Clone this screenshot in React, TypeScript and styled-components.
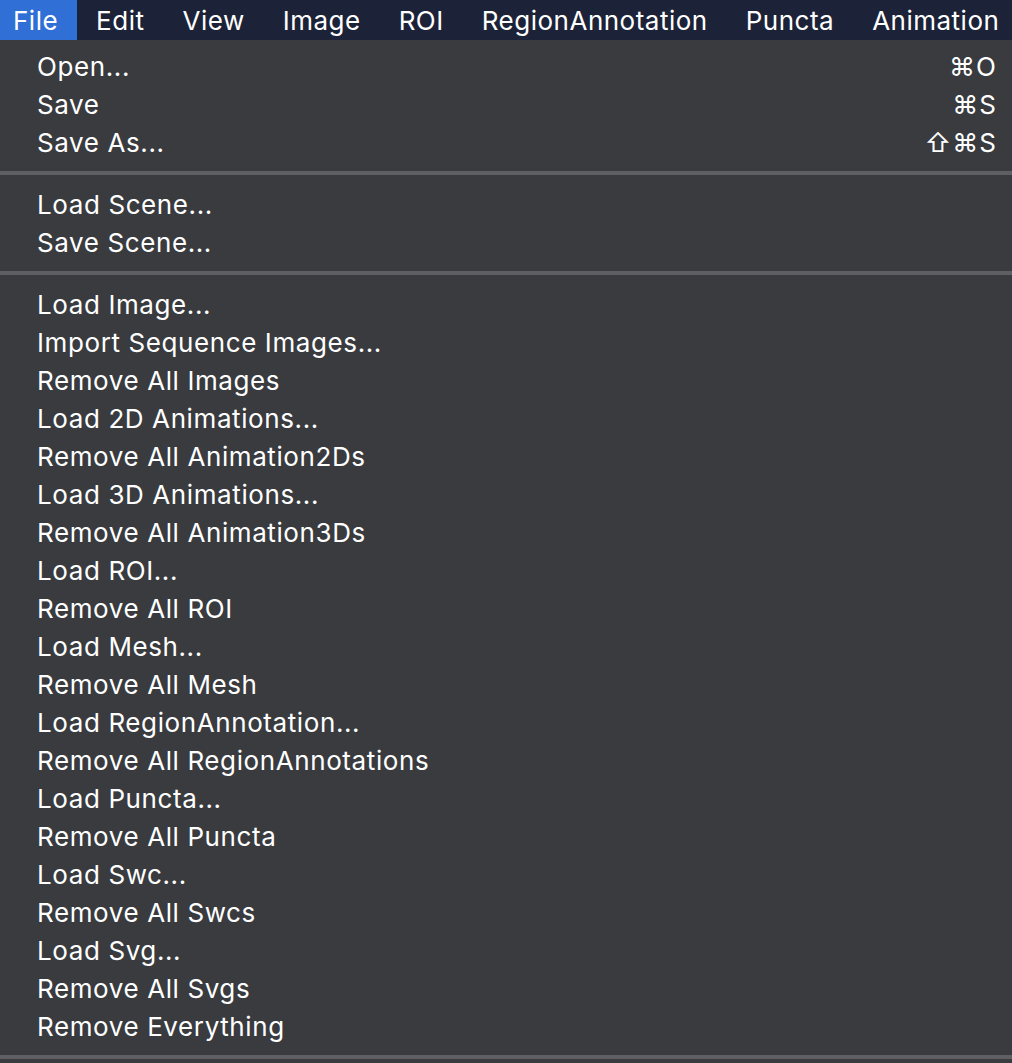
import React from "react";
import styled, { createGlobalStyle } from "styled-components";

const Global = createGlobalStyle`
  html, body { margin: 0; padding: 0; background: #393b3f; }
  body { font-family: Inter, "Noto Sans", "DejaVu Sans", sans-serif; }
  #root { width: 1012px; min-height: 1063px; overflow: hidden; }
`;

const Page = styled.div`
  display: flex;
  flex-direction: column;
  width: 1012px;
  height: 1063px;
  background: #393b3f;
  overflow: hidden;
`;

const MenuBar = styled.nav`
  display: flex;
  align-items: stretch;
  height: 40px;
  background: #1c2338;
  white-space: nowrap;
  flex-shrink: 0;
`;

const BarItem = styled.div<{ $active?: boolean; $first?: boolean }>`
  display: flex;
  align-items: center;
  padding: 0 19px 0 ${(p) => (p.$first ? "13px" : "19px")};
  background: ${(p) => (p.$active ? "#2f6fd6" : "transparent")};
  color: #ffffff;
  font-size: 26px;
  letter-spacing: 0.5px;
`;

const Menu = styled.div`
  display: flex;
  flex-direction: column;
  padding-top: 7px;
`;

const Row = styled.div`
  display: flex;
  align-items: center;
  justify-content: space-between;
  height: 38px;
  padding: 0 15px 0 37px;
  color: #ffffff;
  font-size: 26px;
  letter-spacing: 0.6px;
`;

const Shortcut = styled.span`
  font-size: 26px;
  letter-spacing: 1px;
`;

const Separator = styled.div`
  height: 24px;
  display: flex;
  align-items: center;
  flex-shrink: 0;
  &::after {
    content: "";
    display: block;
    width: 100%;
    height: 4px;
    background: #5e5f63;
  }
`;

const barItems = ["File", "Edit", "View", "Image", "ROI", "RegionAnnotation", "Puncta", "Animation"];

type Item = { label: string; shortcut?: string } | "sep";

const items: Item[] = [
  { label: "Open...", shortcut: "⌘O" },
  { label: "Save", shortcut: "⌘S" },
  { label: "Save As...", shortcut: "⇧⌘S" },
  "sep",
  { label: "Load Scene..." },
  { label: "Save Scene..." },
  "sep",
  { label: "Load Image..." },
  { label: "Import Sequence Images..." },
  { label: "Remove All Images" },
  { label: "Load 2D Animations..." },
  { label: "Remove All Animation2Ds" },
  { label: "Load 3D Animations..." },
  { label: "Remove All Animation3Ds" },
  { label: "Load ROI..." },
  { label: "Remove All ROI" },
  { label: "Load Mesh..." },
  { label: "Remove All Mesh" },
  { label: "Load RegionAnnotation..." },
  { label: "Remove All RegionAnnotations" },
  { label: "Load Puncta..." },
  { label: "Remove All Puncta" },
  { label: "Load Swc..." },
  { label: "Remove All Swcs" },
  { label: "Load Svg..." },
  { label: "Remove All Svgs" },
  { label: "Remove Everything" },
  "sep",
];

export default function App() {
  return (
    <Page>
      <Global />
      <MenuBar>
        {barItems.map((b, i) => (
          <BarItem key={b} $active={i === 0} $first={i === 0}>
            {b}
          </BarItem>
        ))}
      </MenuBar>
      <Menu>
        {items.map((it, i) =>
          it === "sep" ? (
            <Separator key={i} />
          ) : (
            <Row key={i}>
              <span>{it.label}</span>
              {it.shortcut && <Shortcut>{it.shortcut}</Shortcut>}
            </Row>
          )
        )}
      </Menu>
    </Page>
  );
}
